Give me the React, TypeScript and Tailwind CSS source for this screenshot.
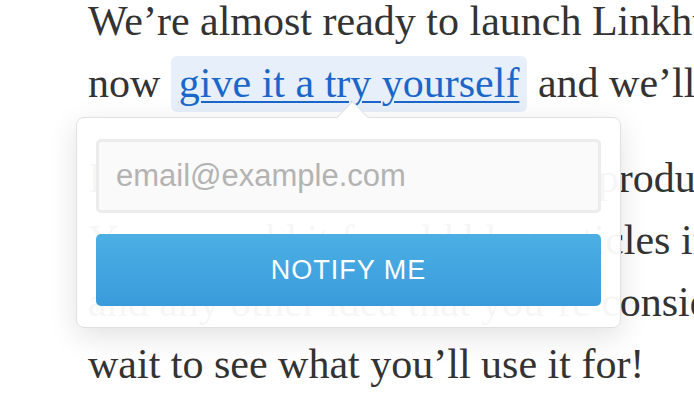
export default function App() {
  return (
    <div className="relative h-[416px] w-[694px] overflow-hidden bg-white">
      <div className="-mt-[10px] whitespace-nowrap pl-[88px] font-['Liberation_Serif',serif] text-[42px] leading-[62px] text-[#333333]">
        <p>
          We’re almost ready to launch Linkhub. Until then, you can
          <br />
          now{" "}
          <span className="rounded-md bg-[#e7f0fa] px-2 pt-1 pb-1.5 text-[#1b67c9] underline decoration-[2px] underline-offset-4">
            give it a try yourself
          </span>{" "}
          and we’ll let you know when it’s ready.
        </p>
        <p className="mt-[33px]">
          It works great for showcasing  products,
          <br />
          You can add it for old blog articles in your
          <br />
          and any other idea that you’re considering. We can’t
          <br />
          wait to see what you’ll use it for!
        </p>
      </div>

      {/* notify popover */}
      <div className="absolute left-[76px] top-[117px] h-[211px] w-[545px] rounded-lg border border-[#e0e0e0] bg-white/[0.955] px-[19px] pt-[21px] shadow-[0_8px_30px_rgba(0,0,0,0.12)]">
        <span className="absolute -top-[12px] left-[264px] h-[23px] w-[23px] rotate-45 border-t border-l border-[#e0e0e0] bg-white" />
        <div className="flex flex-col gap-[21px]">
          <input
            type="email"
            placeholder="email@example.com"
            className="h-[74px] w-full rounded-[5px] border-[3px] border-[#ececec] bg-[#fafafa] px-[17px] font-['Liberation_Sans',sans-serif] text-[31px] text-[#555] outline-none placeholder:text-[#b3b3b3]"
          />
          <button className="h-[72px] w-full rounded-[5px] bg-gradient-to-b from-[#4bafe4] to-[#3a9bdb] font-['Liberation_Sans',sans-serif] text-[27px] tracking-[1px] text-white">
            NOTIFY ME
          </button>
        </div>
      </div>
    </div>
  );
}
